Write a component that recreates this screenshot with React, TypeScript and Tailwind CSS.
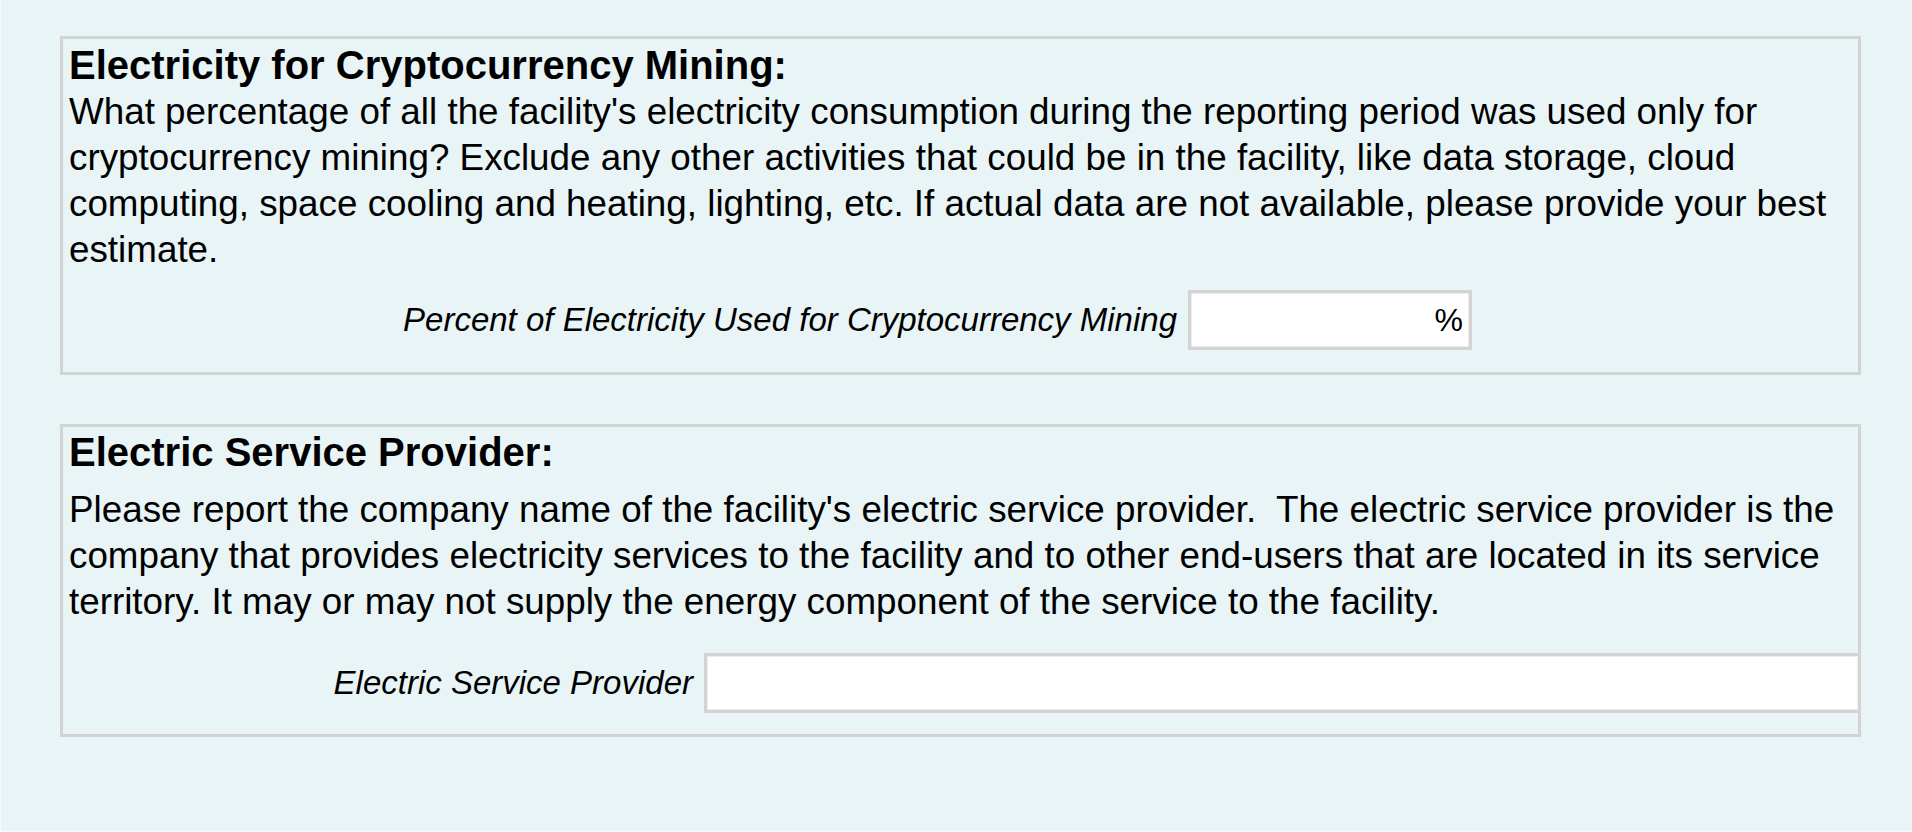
const font = "font-['Liberation_Sans',Arial,Helvetica,sans-serif]";

function Section({
  title,
  children,
  className = '',
}: {
  title: string;
  children: React.ReactNode;
  className?: string;
}) {
  return (
    <div className={`border-[3px] border-[#d3d3d3] pl-[6px] ${className}`}>
      <h2 className="text-[40px] font-bold leading-[46px]">{title}</h2>
      {children}
    </div>
  );
}

export default function App() {
  return (
    <div
      className={`${font} min-h-[832px] border-l border-b border-[#f4fafb] bg-[#e8f4f6] pl-[59px] pr-[51px] pt-[36px] text-black`}
    >
      <Section title="Electricity for Cryptocurrency Mining:" className="pt-[3px] pb-[22px]">
        <p className="mt-px text-[36.8px] leading-[46px]">
          What percentage of all the facility's electricity consumption during the reporting period
          was used only for cryptocurrency mining? Exclude any other activities that could be in the
          facility, like data storage, cloud computing, space cooling and heating, lighting, etc. If
          actual data are not available, please provide your best estimate.
        </p>
        <div className="mt-[17px] flex items-center">
          <label className="w-[1108px] text-right text-[33px] italic">
            Percent of Electricity Used for Cryptocurrency Mining
          </label>
          <div className="ml-[11px] flex h-[60px] w-[284px] items-center border-[3px] border-[#d3d3d3] bg-white pr-[6px] shadow-[inset_0_0_0_1px_#ededed]">
            <input className="h-full min-w-0 flex-1 bg-transparent outline-none" />
            <span className="text-[32px]">%</span>
          </div>
        </div>
      </Section>

      <Section title="Electric Service Provider:" className="mt-[49px] pt-[2px] pb-[21px]">
        <p className="mt-[12px] text-[36.8px] leading-[46px]">
          Please report the company name of the facility's electric service provider.{'\u00a0'} The
          electric service provider is the company that provides electricity services to the
          facility and to other end-users that are located in its service territory. It may or may
          not supply the energy component of the service to the facility.
        </p>
        <div className="mt-[28px] flex items-center">
          <label className="w-[624px] text-right text-[33px] italic">Electric Service Provider</label>
          <input className="-mr-[3px] ml-[11px] h-[60px] min-w-0 flex-1 border-[3px] border-[#d3d3d3] bg-white shadow-[inset_0_0_0_1px_#ededed] outline-none" />
        </div>
      </Section>
    </div>
  );
}
